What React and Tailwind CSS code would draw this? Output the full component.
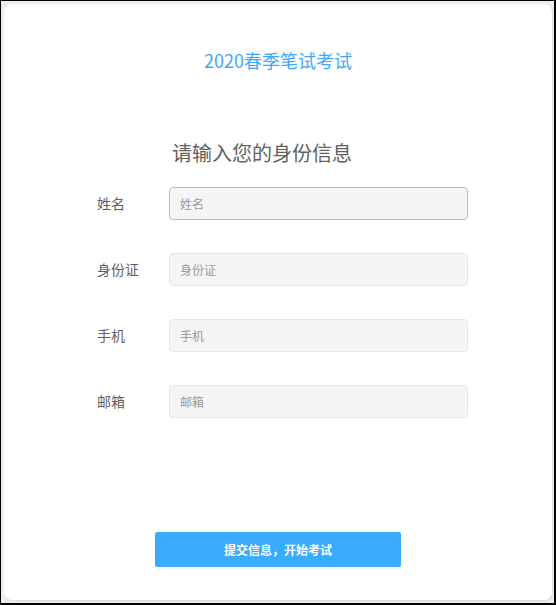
export default function App() {
    const fields = [
        { label: '姓名', placeholder: '姓名', focused: true },
        { label: '身份证', placeholder: '身份证' },
        { label: '手机', placeholder: '手机' },
        { label: '邮箱', placeholder: '邮箱' },
    ];

    return (
        <div className="w-[556px] h-[605px] bg-black pt-px pl-px pr-[2px] pb-[2px] font-['Noto_Sans_CJK_SC','Noto_Sans',sans-serif]">
            <div className="w-full h-full bg-[#ececf1] p-[3px] pr-[2px] pb-[3px]">
                <div className="w-full h-full bg-white rounded-[8px] shadow-[1px_1px_2px_rgba(0,0,0,0.08)] flex flex-col">
                    <h1 className="mt-[44px] text-center text-[18px] leading-[24px] text-[#3ea8f8]">2020春季笔试考试</h1>

                    <h2 className="mt-[67px] pr-[32px] text-center text-[20px] leading-[28px] text-[#5f5f5f]">请输入您的身份信息</h2>

                    {/* form rows */}
                    <div className="mt-[20px] ml-[93px] flex flex-col gap-[33px]">
                        {fields.map((f) => (
                            <div key={f.label} className="flex items-center">
                                <span className="w-[72px] text-[14px] text-[#5f5f5f]">{f.label}</span>
                                <input
                                    autoFocus={f.focused}
                                    placeholder={f.placeholder}
                                    className={`w-[299px] h-[33px] rounded-[4px] bg-[#f5f5f5] px-[10px] text-[12px] text-[#555] placeholder:text-[#999] outline-none border ${f.focused ? 'border-[#8cc6f5] caret-[#444]' : 'border-[#e6e6e6]'}`}
                                />
                            </div>
                        ))}
                    </div>

                    <div className="mt-[114px] flex justify-center">
                        <button className="w-[246px] h-[35px] rounded-[2px] bg-[#39acff] text-white text-[12px] font-bold">
                            提交信息，开始考试
                        </button>
                    </div>
                </div>
            </div>
        </div>
    );
}
